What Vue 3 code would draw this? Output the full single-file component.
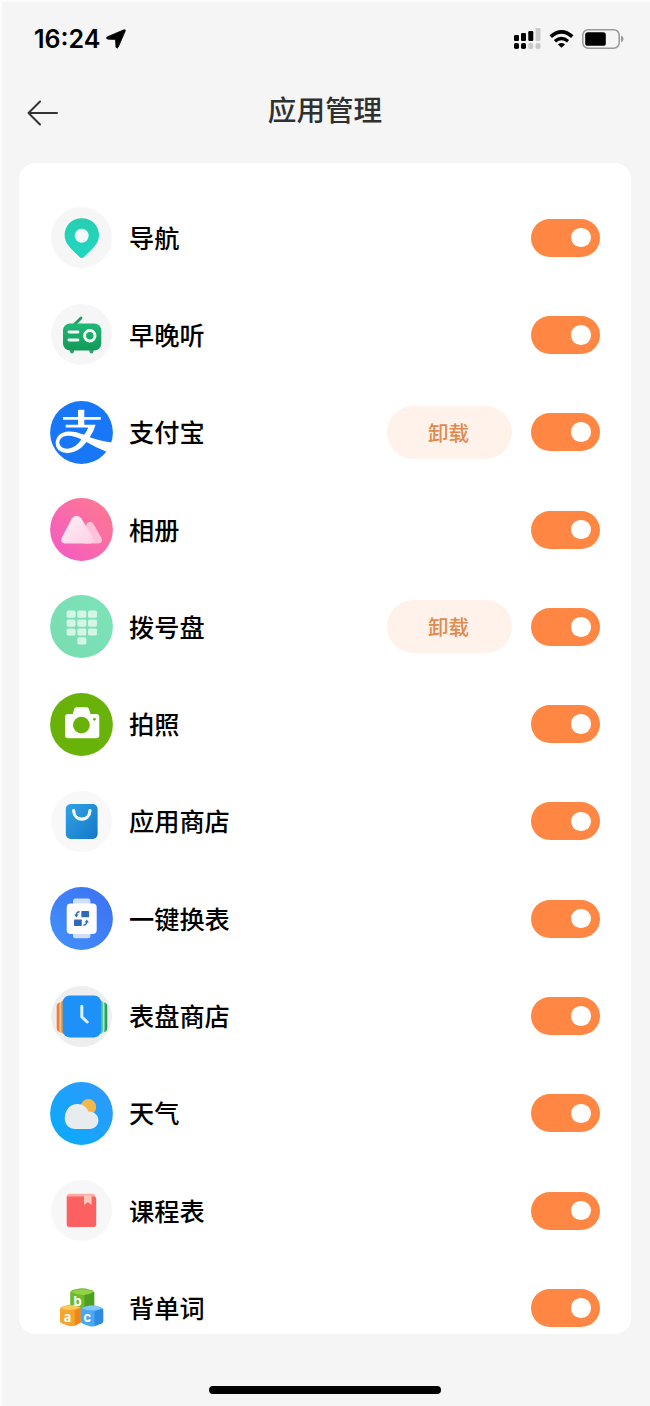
<template>
  <div class="page">
    <div class="status-bar">
      <div class="status-time">
        <span>16:24</span>
        <svg width="20" height="20" viewBox="0 0 20 20">
          <path d="M17.8 .8 Q20 .2 19.2 2.3 L12.3 18 Q11 20.4 9.9 18 L9.5 10.6 L2 10.2 Q-1 9.3 1.5 7.7 Z" stroke="#000" stroke-width=".7" />
        </svg>
      </div>
      <div class="status-icons">
        <svg width="27" height="22" viewBox="0 0 27 22">
          <rect x="0" y="7" width="5" height="6" rx="1.2" />
          <rect x="7" y="5" width="5" height="8" rx="1.2" />
          <rect x="14.3" y="3" width="5" height="10" rx="1.2" />
          <rect x="21.5" y="0" width="5" height="13" rx="1.2" fill="#c9c9c9" />
          <rect x="0" y="15" width="5" height="6" rx="1.8" />
          <rect x="7" y="15" width="5" height="6" rx="1.8" />
          <rect x="14.3" y="15" width="5" height="6" rx="1.8" fill="#c9c9c9" />
          <rect x="21.5" y="15" width="5" height="6" rx="1.8" fill="#c9c9c9" />
        </svg>
        <svg width="25" height="20" viewBox="0 0 26 20">
          <path d="M1.8 7.6 Q13 -2.4 24.2 7.6" fill="none" stroke="#000" stroke-width="3.8" />
          <path d="M6.2 12.4 Q13 6.4 19.8 12.4" fill="none" stroke="#000" stroke-width="3.4" />
          <path d="M9.3 15.6 Q13 12.6 16.7 15.6 L13 19.2 Z" />
        </svg>
        <svg width="42" height="20" viewBox="0 0 42 20">
          <rect x=".8" y=".8" width="36.4" height="18.4" rx="5.4" fill="none" stroke="#999" stroke-width="1.5" />
          <rect x="3.2" y="3.2" width="20.6" height="13.6" rx="2.6" />
          <path d="M39 6.6 Q41.6 8 41.6 10 Q41.6 12 39 13.4 Z" fill="#999" />
        </svg>
      </div>
    </div>

    <header class="header">
      <svg class="back" width="32" height="26" viewBox="0 0 32 26">
        <path d="M13 1.5 L1.5 13 L13 24.5 M1.5 13 H30" />
      </svg>
      <h1>应用管理</h1>
    </header>

    <main class="card">
      <div v-for="app in apps" :key="app.id" class="app-row">
        <svg class="app-icon" viewBox="0 0 63 63">
          <defs>
            <linearGradient :id="'bg-' + app.id" x1="1" y1="0" x2="0" y2="1">
              <stop offset="0" :stop-color="app.from" />
              <stop offset="1" :stop-color="app.to" />
            </linearGradient>
          </defs>
          <circle cx="31.5" cy="31.5" :r="app.light ? 30.5 : 31.4" :fill="`url(#bg-${app.id})`" />

          <g v-if="app.id === 'nav'">
            <linearGradient id="pin" x1="0" y1="0" x2="0" y2="1">
              <stop offset="0" stop-color="#27cfb0" />
              <stop offset="1" stop-color="#1fd6c2" />
            </linearGradient>
            <path d="M31.8 12.2 C41.5 12.2 49 19.6 49 29 C49 38 42.5 42.7 34 51 Q31.8 53 29.6 51 C21.1 42.7 14.6 38 14.6 29 C14.6 19.6 22.1 12.2 31.8 12.2 Z" fill="url(#pin)" />
            <circle cx="31.7" cy="29.8" r="7" fill="#f3fbfa" />
          </g>

          <g v-else-if="app.id === 'radio'">
            <linearGradient id="radio-body" x1="0" y1="0" x2="0" y2="1">
              <stop offset="0" stop-color="#20b877" />
              <stop offset="1" stop-color="#129a58" />
            </linearGradient>
            <path d="M24.5 21.5 L31 15" stroke="#159e5e" stroke-width="2.8" stroke-linecap="round" />
            <path d="M22 46 V48.4 M41.5 46 V48.4" stroke="#3a9d6c" stroke-width="4" stroke-linecap="round" />
            <rect x="13" y="20.5" width="38.3" height="27" rx="7" fill="url(#radio-body)" />
            <path d="M18.9 29 H28 M18.9 37 H28" stroke="#f2fbf6" stroke-width="2.8" stroke-linecap="round" />
            <circle cx="39.8" cy="32.8" r="5.2" fill="none" stroke="#f2fbf6" stroke-width="3" />
          </g>

          <g v-else-if="app.id === 'alipay'" fill="#fff">
            <path d="M28 8.7 H34.3 V16 H50.7 V18.8 H34.3 V23.8 H45.6 Q43.8 30.5 39.7 36.2 Q48.5 39.5 61.9 41.6 Q60.6 47.4 57.6 51.2 Q46 46.6 36.5 40.9 Q28.5 51.6 17.2 52.2 Q5.8 51.4 5.6 42 Q6.6 31 18.8 30.4 Q25.5 30.2 34.2 33.8 Q36.8 30.6 38.2 26.6 H15.7 V23.8 H28 V18.8 H13 V16 H28 Z" />
            <path d="M31.4 38.4 Q23.5 34.2 17 34.7 Q9.6 35.8 9.2 41.4 Q9.8 47.4 17.2 47.8 Q25.5 47.2 31.4 38.4 Z" fill="#1777f7" />
          </g>

          <g v-else-if="app.id === 'album'">
            <linearGradient id="peak" x1="0" y1="0" x2="1" y2="1">
              <stop offset="0" stop-color="#fff0f6" />
              <stop offset="1" stop-color="#ffcfe6" />
            </linearGradient>
            <path d="M36.5 26 Q40.3 21.6 43.6 26 L51.4 39.8 Q53.6 44.8 48.5 45.4 H34 Z" fill="#ffc0d8" />
            <path d="M22 20.3 Q26.8 15 31.2 20.3 L43.4 40 Q45.3 44.8 40.4 45.4 H14.5 Q10 44.8 11.8 39.8 Z" fill="url(#peak)" />
          </g>

          <g v-else-if="app.id === 'dial'" fill="#d3f6e5">
            <rect v-for="(k, i) in keys" :key="i" :x="k[0]" :y="k[1]" width="9" height="7.2" rx="1.6" />
          </g>

          <g v-else-if="app.id === 'camera'">
            <path d="M22.8 21 L24.2 16 Q24.7 14.3 26.5 14.3 H36.7 Q38.4 14.3 38.9 16 L40.5 21 H46 Q49.3 21 49.3 24.3 V42 Q49.3 45.2 46 45.2 H18.2 Q15 45.2 15 42 V24.3 Q15 21 18.2 21 Z" fill="#fff" />
            <circle cx="31.4" cy="32.1" r="8.4" fill="#69b20a" />
            <circle cx="44.4" cy="26.3" r="1.4" fill="#69b20a" />
          </g>

          <g v-else-if="app.id === 'store'">
            <linearGradient id="bag" x1="0" y1="0" x2="1" y2="1">
              <stop offset="0" stop-color="#31a3e8" />
              <stop offset="1" stop-color="#1478c4" />
            </linearGradient>
            <rect x="15.8" y="14" width="31.8" height="35" rx="5" fill="url(#bag)" />
            <path d="M23.6 20.7 C24.4 32 39.2 32 40 20.7" fill="none" stroke="#f2faff" stroke-width="3.2" stroke-linecap="round" />
          </g>

          <g v-else-if="app.id === 'switch'">
            <rect x="23" y="11.5" width="17.4" height="39.8" rx="2.5" fill="#cfe0ff" />
            <rect x="16.7" y="16.5" width="30" height="30.4" rx="4" fill="#fff" />
            <g fill="#3268ba">
              <rect x="31.3" y="24" width="7.8" height="6.2" rx=".8" />
              <rect x="24" y="32.6" width="7.8" height="6.4" rx=".8" />
              <path d="M24.2 27.4 L26.3 30.6 L28.6 27.6 Z" />
              <path d="M34.6 35.4 L36.8 32.4 L38.8 35.4 Z" />
            </g>
            <path d="M26.3 28.4 Q26.3 25 29.6 24.8 M36.8 34.6 Q36.8 38 33.4 38.3" fill="none" stroke="#3268ba" stroke-width="1.4" />
          </g>

          <g v-else-if="app.id === 'faces'">
            <rect x="6.7" y="17.5" width="14" height="29.5" rx="4" fill="#f07b3c" />
            <rect x="9.3" y="16" width="14" height="32.5" rx="4" fill="#f7c28d" />
            <rect x="11" y="15" width="14" height="34" rx="4" fill="#e99a41" />
            <rect x="43.3" y="17.5" width="14" height="29.5" rx="4" fill="#2b9f62" />
            <rect x="40.6" y="16" width="14" height="32.5" rx="4" fill="#a5e7c8" />
            <rect x="38.8" y="15" width="14" height="34" rx="4" fill="#43c987" />
            <rect x="12.7" y="10.4" width="38.4" height="42" rx="7" fill="#1d91f8" />
            <path d="M31.8 21.2 V32 L37.2 37" fill="none" stroke="#dff3ff" stroke-width="3" stroke-linecap="round" stroke-linejoin="round" />
          </g>

          <g v-else-if="app.id === 'weather'">
            <circle cx="38.4" cy="24.9" r="7.8" fill="#f3b84a" />
            <path d="M25.5 46.9 C19 46.9 14.8 42.3 14.8 36.4 C14.8 28 20 22 27.5 22 C33 22 36.7 25.2 38.4 29.6 C44 29.4 48.4 33 48.4 38.3 C48.4 43.3 44.7 46.9 39.6 46.9 Z" fill="#e8ecee" />
          </g>

          <g v-else-if="app.id === 'course'">
            <rect x="17" y="14.8" width="28" height="8" rx="2.5" fill="#ffaaa3" />
            <path d="M16.7 17.4 H44 Q46.2 17.4 46.2 19.6 V45.3 Q46.2 47.9 43.6 47.9 H19.3 Q16.7 47.9 16.7 45.3 Z" fill="#fc6060" />
            <path d="M34 16.6 H41.6 V26 L37.8 23.2 L34 26 Z" fill="#ffc6bb" />
          </g>

          <g v-else-if="app.id === 'words'" class="letters">
            <path d="M20.2 17 Q20 14.8 22.5 14 L29.5 12.5 Q32.5 12 35.5 12.6 L42 14.2 Q44.3 15 44.2 17 V30 L32 35 L20.2 31 Z" fill="#6dbb2b" />
            <path d="M21 15.8 Q31.5 10.6 43.5 15.6 Q39 19.4 32.5 19 Q26 18.8 21 15.8 Z" fill="#93d246" />
            <path d="M34.5 19 Q40 18.5 44.2 16 V30 L34.5 34 Z" fill="#4b9f23" />
            <path d="M10 33.5 Q10 31.6 12 30.8 L18 29 Q21 28.5 24 29.2 L30.8 31.4 V46.5 L24.5 49.8 Q21 50.8 17.5 49.6 L12 47.6 Q10 46.8 10 45 Z" fill="#f6a52e" />
            <path d="M10.8 32 Q20 27 30 31.5 Q20 36 10.8 32 Z" fill="#ffc95a" />
            <path d="M24.8 34.5 L30.8 32 V46.5 L24.8 49.7 Z" fill="#ec861d" />
            <path d="M30.8 32 L38 29.6 Q42 28.6 46 29.8 L51.2 31.5 Q53.3 32.4 53.2 34.5 V45 Q53.2 46.8 51.5 47.5 L45 50 Q42 51 39 50 L32.8 47.7 Q30.8 46.8 30.8 45 Z" fill="#4aa7f5" />
            <path d="M31.8 32.2 Q42 27 52.4 32.2 Q42 37 31.8 32.2 Z" fill="#82c8ff" />
            <path d="M44.5 35.4 L53.2 32.4 V45 Q53.2 46.8 51.5 47.5 L44.5 50.2 Z" fill="#2f8be2" />
            <text x="27.6" y="30.4">b</text>
            <text x="17.6" y="45.8">a</text>
            <text x="37.3" y="45.8">c</text>
          </g>
        </svg>
        <span class="app-name">{{ app.name }}</span>
        <button v-if="app.removable" class="uninstall">卸载</button>
        <button class="toggle" :class="{ on: app.enabled }" @click="app.enabled = !app.enabled">
          <span class="knob"></span>
        </button>
      </div>
    </main>

    <footer class="home">
      <div class="home-bar"></div>
    </footer>
  </div>
</template>

<script setup>
import { ref } from 'vue';

const apps = ref([
  { id: 'nav', name: '导航', from: '#f6f6f6', to: '#f6f6f6', light: true, enabled: true },
  { id: 'radio', name: '早晚听', from: '#f6f6f6', to: '#f6f6f6', light: true, enabled: true },
  { id: 'alipay', name: '支付宝', from: '#1777f7', to: '#1777f7', removable: true, enabled: true },
  { id: 'album', name: '相册', from: '#ff7b8c', to: '#f359c8', enabled: true },
  { id: 'dial', name: '拨号盘', from: '#7de3b9', to: '#78dcb0', removable: true, enabled: true },
  { id: 'camera', name: '拍照', from: '#69b20a', to: '#69b20a', enabled: true },
  { id: 'store', name: '应用商店', from: '#f8f8f8', to: '#f8f8f8', light: true, enabled: true },
  { id: 'switch', name: '一键换表', from: '#3d6ff2', to: '#4193fb', enabled: true },
  { id: 'faces', name: '表盘商店', from: '#eeeeee', to: '#eeeeee', light: true, enabled: true },
  { id: 'weather', name: '天气', from: '#3398fb', to: '#06acfc', enabled: true },
  { id: 'course', name: '课程表', from: '#f7f7f7', to: '#f7f7f7', light: true, enabled: true },
  { id: 'words', name: '背单词', from: '#ffffff', to: '#ffffff', light: true, enabled: true }
]);

// keypad: three full rows and a single key below
const keys = [];
for (let row = 0; row < 3; row++) {
  for (let col = 0; col < 3; col++) {
    keys.push([16.6 + col * 10.7, 15.6 + row * 8.9]);
  }
}
keys.push([27.3, 42.3]);
</script>

<style>
body {
  margin: 0;
  background: #f5f5f5;
}
</style>

<style scoped>
.page {
  width: 650px;
  height: 1406px;
  box-sizing: border-box;
  display: flex;
  flex-direction: column;
  overflow: hidden;
  background: #f5f5f5;
  box-shadow: inset 2px 2px 0 #fcfcfc;
  font-family: Inter, "Noto Sans CJK SC", sans-serif;
}

.status-bar {
  height: 78px;
  flex-shrink: 0;
  box-sizing: border-box;
  padding: 0 26px 0 34px;
  display: flex;
  align-items: center;
  justify-content: space-between;
}

.status-time {
  display: flex;
  align-items: center;
  gap: 6px;
  font-size: 25px;
  font-weight: 600;
  color: #000;
}

.status-icons {
  display: flex;
  align-items: center;
  gap: 8px;
}

.header {
  height: 85px;
  flex-shrink: 0;
  display: grid;
  grid-template-columns: 86px 1fr 86px;
  align-items: start;
}

.back {
  margin: 22px 0 0 27px;
  fill: none;
  stroke: #333;
  stroke-width: 2;
  stroke-linecap: round;
  stroke-linejoin: round;
}

h1 {
  margin: 13px 0 0;
  text-align: center;
  font-size: 28.6px;
  line-height: 40px;
  font-weight: 500;
  color: #303030;
}

.card {
  height: 1171px;
  flex-shrink: 0;
  box-sizing: border-box;
  margin: 0 19px;
  padding: 26px 31px 0;
  background: #fff;
  border-radius: 16px;
  overflow: hidden;
}

.app-row {
  height: 97.3px;
  display: flex;
  align-items: center;
}

.app-icon {
  width: 63px;
  height: 63px;
  flex-shrink: 0;
}

.letters text {
  fill: #fff;
  font-family: Inter, sans-serif;
  font-size: 13px;
  font-weight: 700;
  text-anchor: middle;
}

.app-name {
  flex: 1;
  margin-left: 16px;
  padding-top: 2px;
  font-size: 25.2px;
  line-height: 36px;
  font-weight: 500;
  color: #000;
}

button {
  border: none;
  padding: 0;
  font-family: inherit;
  cursor: pointer;
}

.uninstall {
  width: 125px;
  height: 53px;
  margin-right: 18.5px;
  padding: 0 2px 1px 0;
  border-radius: 27px;
  background: #fff2eb;
  color: #df8a4f;
  font-size: 20.5px;
  font-weight: 500;
}

.toggle {
  width: 69.4px;
  height: 38px;
  box-sizing: border-box;
  padding: 0 9.5px;
  border-radius: 19px;
  background: #ddd;
  display: flex;
  align-items: center;
}

.toggle.on {
  background: #ff8743;
  justify-content: flex-end;
}

.knob {
  width: 19.5px;
  height: 19.5px;
  border-radius: 50%;
  background: #fff;
}

.home {
  flex: 1;
  display: flex;
  justify-content: center;
  align-items: flex-start;
}

.home-bar {
  width: 232px;
  height: 8px;
  margin-top: 51.5px;
  border-radius: 4px;
  background: #000;
}
</style>
